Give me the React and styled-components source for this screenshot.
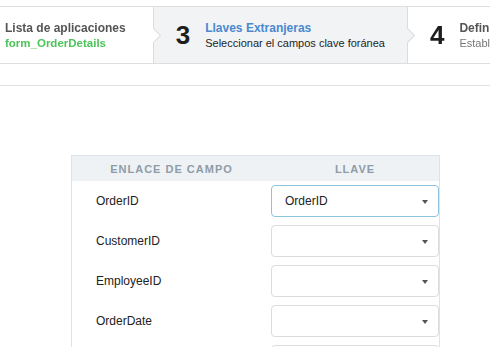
import React from "react";
import styled, { createGlobalStyle } from "styled-components";

const GlobalStyle = createGlobalStyle`
  html, body { margin: 0; padding: 0; background: #fff; overflow: hidden; }
  body { font-family: "Liberation Sans", Arial, sans-serif; color: #222; }
`;

const Page = styled.div`
  padding-top: 6px;
  width: 490px;
  overflow: hidden;
`;

const Stepper = styled.div`
  display: flex;
  height: 58px;
  box-sizing: border-box;
  border-top: 1px solid #dedede;
  border-bottom: 1px solid #dedede;
  margin-left: -17px;
  width: 560px;
`;

const Step = styled.div`
  position: relative;
  display: flex;
  align-items: center;
  flex: ${(p) => (p.$last ? "1" : "none")};
  padding: 0 ${(p) => (p.$wide ? "27px" : "22px")} 0 22px;
  background: ${(p) => (p.$active ? "#f2f3f5" : "#fff")};
  border-right: ${(p) => (p.$last ? "none" : "1px solid #dcdcdc")};

  &::after {
    content: "";
    display: ${(p) => (p.$last ? "none" : "block")};
    position: absolute;
    right: -6px;
    top: 50%;
    margin-top: -5.5px;
    width: 10px;
    height: 10px;
    background: ${(p) => (p.$active ? "#f2f3f5" : "#fff")};
    border-top: 1px solid #dcdcdc;
    border-right: 1px solid #dcdcdc;
    transform: rotate(45deg);
    z-index: 2;
  }
`;

const StepBody = styled.div`
  display: flex;
  align-items: center;
  filter: ${(p) => (p.$blur ? "blur(0.6px)" : "none")};
`;

const StepNumber = styled.span`
  font-size: 26px;
  font-weight: bold;
  line-height: 1;
  color: #1e1e1e;
  margin-right: 15px;
`;

const StepText = styled.div`
  display: flex;
  flex-direction: column;
`;

const StepTitle = styled.span`
  font-size: 12px;
  font-weight: bold;
  line-height: 15px;
  white-space: nowrap;
  color: ${(p) => (p.$active ? "#4a89cf" : "#555")};
`;

const StepSub = styled.span`
  font-size: ${(p) => (p.$green ? "11.5px" : "11px")};
  font-weight: ${(p) => (p.$green ? "bold" : "normal")};
  line-height: 14px;
  white-space: nowrap;
  color: ${(p) => (p.$green ? "#4cc45a" : p.$muted ? "#777" : "#1e1e1e")};
`;

const Toolbar = styled.div`
  height: 21px;
  border-bottom: 1px solid #e2e2e2;
`;

const Table = styled.div`
  margin: 69px 0 0 71px;
  width: 369px;
  box-sizing: border-box;
  border: 1px solid #dde3e8;
  border-bottom: none;
  display: grid;
  grid-template-columns: 199px 1fr;
`;

const HeadCell = styled.div`
  height: 25px;
  display: flex;
  align-items: center;
  justify-content: center;
  background: #eef2f5;
  font-size: 11px;
  font-weight: bold;
  letter-spacing: 1px;
  color: #8e9ca7;
`;

const LabelCell = styled.div`
  height: 40px;
  display: flex;
  align-items: center;
  padding-left: 24px;
  font-size: 12px;
  color: #222;
`;

const SelectCell = styled.div`
  height: 40px;
  display: flex;
  align-items: center;
`;

const SelectBox = styled.div`
  position: relative;
  width: 100%;
  height: 32px;
  box-sizing: border-box;
  border: 1px solid ${(p) => (p.$focus ? "#8cc4de" : "#dcdcdc")};
  border-radius: 4px;
  background: #fff;
  display: flex;
  align-items: center;
  padding-left: 13px;
  font-size: 12px;
  color: #222;

  &::after {
    content: "";
    position: absolute;
    right: 10px;
    top: 50%;
    margin-top: -1px;
    border-top: 4px solid #555;
    border-left: 3.5px solid transparent;
    border-right: 3.5px solid transparent;
  }
`;

const rows = [
  { name: "OrderID", value: "OrderID", focus: true },
  { name: "CustomerID", value: "" },
  { name: "EmployeeID", value: "" },
  { name: "OrderDate", value: "" },
  { name: "RequiredDate", value: "" },
];

export default function App() {
  return (
    <Page>
      <GlobalStyle />
      <Stepper>
        <Step $wide>
          <StepBody $blur>
            <StepText>
              <StepTitle>Lista de aplicaciones</StepTitle>
              <StepSub $green>form_OrderDetails</StepSub>
            </StepText>
          </StepBody>
        </Step>
        <Step $active>
          <StepBody>
            <StepNumber>3</StepNumber>
            <StepText>
              <StepTitle $active>Llaves Extranjeras</StepTitle>
              <StepSub>Seleccionar el campos clave foránea</StepSub>
            </StepText>
          </StepBody>
        </Step>
        <Step $last>
          <StepBody $blur>
            <StepNumber>4</StepNumber>
            <StepText>
              <StepTitle>Definir relaciones</StepTitle>
              <StepSub $muted>Establecer los campos</StepSub>
            </StepText>
          </StepBody>
        </Step>
      </Stepper>
      <Toolbar />
      <Table>
        <HeadCell>ENLACE DE CAMPO</HeadCell>
        <HeadCell>LLAVE</HeadCell>
        {rows.map((r) => (
          <React.Fragment key={r.name}>
            <LabelCell>{r.name}</LabelCell>
            <SelectCell>
              <SelectBox $focus={r.focus}>{r.value}</SelectBox>
            </SelectCell>
          </React.Fragment>
        ))}
      </Table>
    </Page>
  );
}
